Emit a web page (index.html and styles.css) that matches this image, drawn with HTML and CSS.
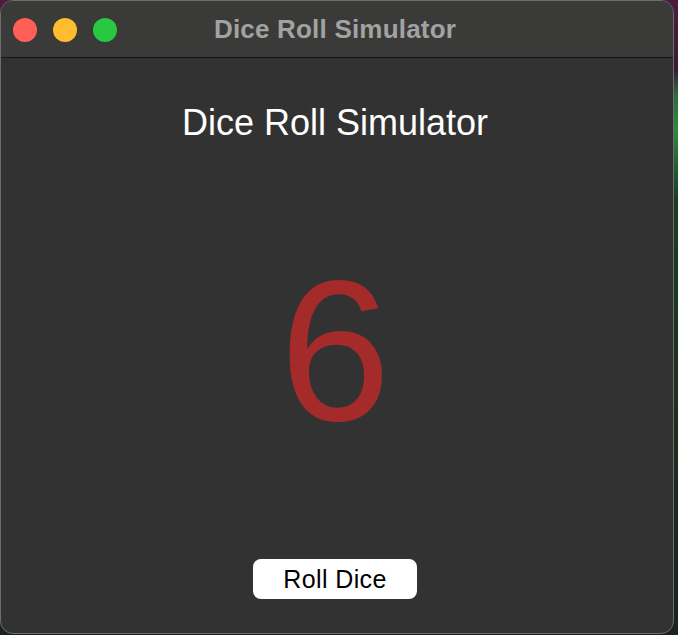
FILE: index.html
```html
<!DOCTYPE html>
<html lang="en">
<head>
<meta charset="utf-8">
<title>Dice Roll Simulator</title>
<link rel="stylesheet" href="styles.css">
</head>
<body>
<div class="window">
  <div class="titlebar">
    <div class="lights">
      <span class="light red"></span>
      <span class="light yellow"></span>
      <span class="light green"></span>
    </div>
    <div class="title">Dice Roll Simulator</div>
  </div>
  <div class="content">
    <h1 class="heading">Dice Roll Simulator</h1>
    <div class="die">6</div>
    <button class="roll">Roll Dice</button>
  </div>
</div>
</body>
</html>
```
FILE: styles.css
```css
html, body {
  margin: 0;
  padding: 0;
  height: 100%;
}
body {
  background: linear-gradient(to bottom, #4a1d3d 0px, #3b1a33 70px, #2f6b3a 95px, #2c8a40 130px, #1d3a24 200px, #1a221c 635px);
  font-family: "Liberation Sans", Arial, sans-serif;
  overflow: hidden;
}
.window {
  width: 672px;
  height: 632px;
  border: 1px solid #6c6c6c;
  border-radius: 13px;
  overflow: hidden;
  background: #323232;
  display: flex;
  flex-direction: column;
}
.titlebar {
  height: 56px;
  background: #3a3b39;
  border-bottom: 1px solid #141414;
  display: flex;
  align-items: center;
  position: relative;
}
.lights {
  display: flex;
  gap: 16px;
  padding-left: 12px;
  padding-top: 1px;
}
.light {
  width: 24px;
  height: 24px;
  border-radius: 50%;
  display: block;
}
.red { background: #fe5f57; }
.yellow { background: #febc2e; }
.green { background: #28c840; }
.title {
  position: absolute;
  left: 0;
  right: 0;
  top: 0;
  bottom: 0;
  display: flex;
  align-items: center;
  justify-content: center;
  padding-right: 4px;
  font-weight: bold;
  font-size: 26px;
  letter-spacing: 0.2px;
  color: #a2a2a2;
  padding-top: 1px;
}
.content {
  display: flex;
  flex-direction: column;
  align-items: center;
  padding-right: 4px;
}
.heading {
  margin: 47px 0 0;
  font-weight: normal;
  font-size: 36px;
  line-height: 36px;
  color: #ffffff;
}
.die {
  margin-top: 110px;
  font-size: 200px;
  line-height: 200px;
  color: #a52a2a;
}
.roll {
  margin-top: 108px;
  width: 164px;
  height: 40px;
  border: none;
  border-radius: 8px;
  background: #ffffff;
  color: #000000;
  font-family: "Liberation Sans", Arial, sans-serif;
  font-size: 25px;
  letter-spacing: 0.4px;
  padding: 0 0 0 0;
}
```
